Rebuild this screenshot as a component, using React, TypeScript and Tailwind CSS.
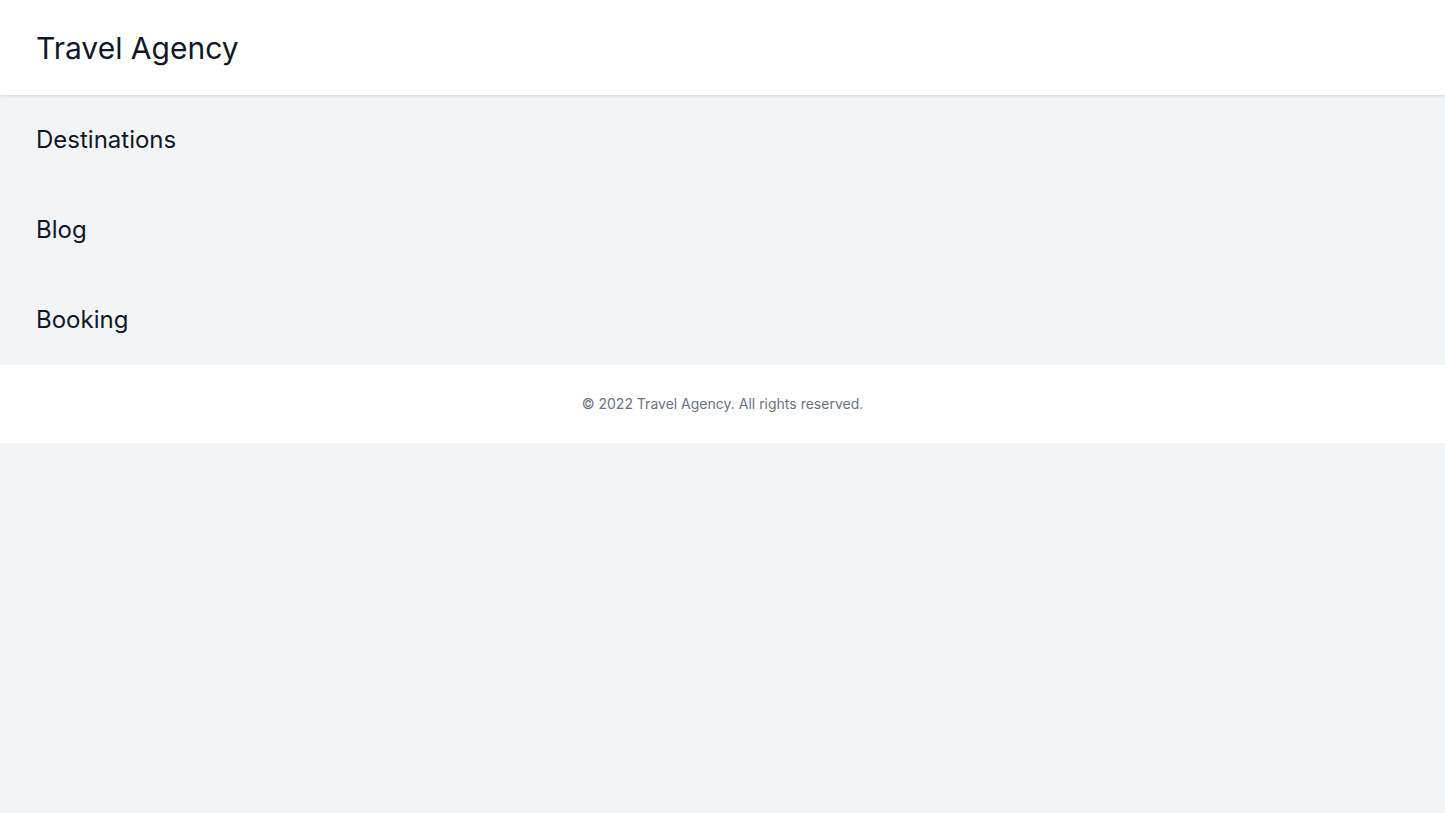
export default function App() {
  const sections = ["Destinations", "Blog", "Booking"];

  return (
    <div className="min-h-screen bg-gray-100 text-gray-900 font-['Inter',sans-serif]">
      <header className="relative z-10 bg-white shadow h-[95px] flex items-center px-9">
        <h1 className="text-3xl">Travel Agency</h1>
      </header>

      <main>
        {sections.map((title) => (
          <section key={title} className="h-[90px] flex items-center px-9">
            <h2 className="text-2xl">{title}</h2>
          </section>
        ))}
      </main>

      <footer className="bg-white h-[78px] flex items-center justify-center">
        <p className="text-sm text-gray-500">© 2022 Travel Agency. All rights reserved.</p>
      </footer>
    </div>
  );
}
